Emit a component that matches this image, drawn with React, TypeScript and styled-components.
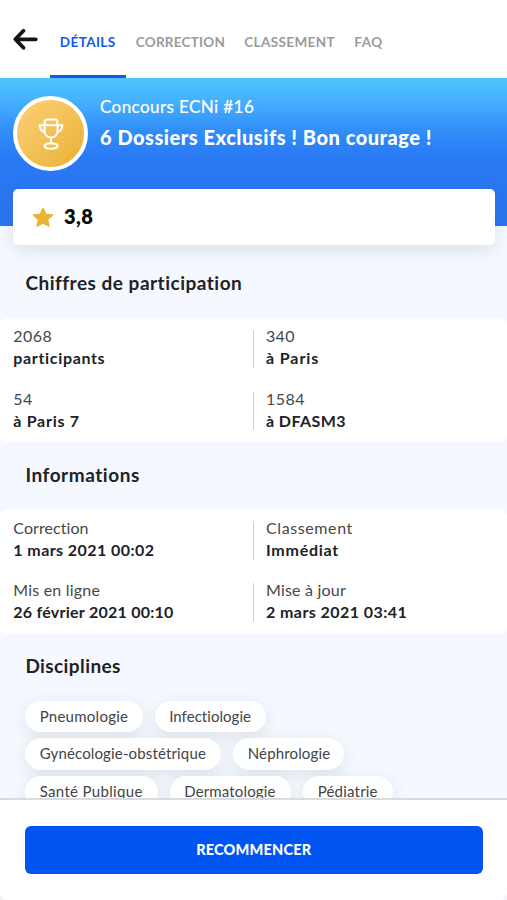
import React from 'react';
import styled, { createGlobalStyle } from 'styled-components';

const GlobalStyle = createGlobalStyle`
  *, *::before, *::after { box-sizing: border-box; }
  body {
    margin: 0;
    background: #f2f4f7;
    font-family: Lato, "Open Sans", sans-serif;
    color: #202225;
    font-variant-ligatures: none;
    overflow: hidden;
  }
`;

type Spaced = { $ls?: number };

const Screen = styled.div`
  display: flex;
  flex-direction: column;
  width: 100%;
  height: 900px;
  background: #f5f9ff;
  border-radius: 0 0 8px 8px;
  overflow: hidden;
`;

const TopBar = styled.header`
  display: flex;
  flex: none;
  height: 78px;
  padding-left: 12px;
  background: #fff;
`;

const BackButton = styled.button`
  display: flex;
  width: 38px;
  padding: 27px 0 0;
  border: 0;
  background: none;
`;

const Tabs = styled.nav`
  display: flex;
`;

const Tab = styled.a<{ $active?: boolean; $width: number } & Spaced>`
  width: ${p => p.$width}px;
  padding: 32px 0 0 9.8px;
  border-bottom: 3px solid ${p => (p.$active ? '#0d59e8' : 'transparent')};
  color: ${p => (p.$active ? '#0f5aeb' : '#9b9b9b')};
  font-size: 13.5px;
  font-weight: 700;
  line-height: 21px;
  letter-spacing: ${p => p.$ls ?? 0}px;
  white-space: nowrap;
`;

const Scroll = styled.main`
  flex: 1;
  min-height: 0;
  overflow: hidden;
`;

const Hero = styled.section`
  height: 147.5px;
  padding: 18px 12.5px 0 13px;
  background: linear-gradient(180deg, #4fc3ff 0, #45b0fd 24px, #3290f8 50px, #2979f4 80px, #2a74ee 100%);
`;

const HeroHead = styled.div`
  display: flex;
  gap: 12px;
  height: 93.3px;
`;

const Medal = styled.div`
  display: flex;
  align-items: center;
  justify-content: center;
  width: 75px;
  height: 75px;
  border: 4px solid #fff;
  border-radius: 50%;
  background: linear-gradient(135deg, #fbd076 0%, #f3c158 50%, #e9b032 100%);
`;

const HeroText = styled.div`
  color: #fff;
  white-space: nowrap;
`;

const Subtitle = styled.div<Spaced>`
  font-size: 17px;
  line-height: 21px;
  letter-spacing: ${p => p.$ls ?? 0}px;
  -webkit-text-stroke: 0.2px #fff;
`;

const Title = styled.h1<Spaced>`
  margin: 8px 0 0;
  font-size: 20px;
  font-weight: 900;
  line-height: 24px;
  letter-spacing: ${p => p.$ls ?? 0}px;
`;

const RatingCard = styled.div`
  display: flex;
  align-items: center;
  gap: 10px;
  height: 56px;
  padding-left: 19px;
  border-radius: 5px;
  background: #fff;
  box-shadow: 0 6px 18px rgba(60, 70, 100, 0.13);
`;

const Rating = styled.strong`
  padding-bottom: 2px;
  color: #08090b;
  font-size: 20px;
  font-weight: 800;
  letter-spacing: 0.4px;
`;

const Section = styled.section`
  height: 191.5px;
`;

const Sections = styled.div`
  padding-top: 44.5px;
`;

const Heading = styled.h2<Spaced>`
  height: 47.5px;
  margin: 0;
  padding-left: 25.4px;
  font-size: 19px;
  font-weight: 700;
  line-height: 25px;
  letter-spacing: ${p => p.$ls ?? 0}px;
`;

const Panel = styled.div`
  display: grid;
  grid-template-columns: 252.5px 1fr;
  grid-auto-rows: 38.5px;
  row-gap: 23.8px;
  height: 124.5px;
  padding: 12px 0;
  border-radius: 8px;
  background: #fff;
`;

const Cell = styled.div`
  padding-left: 13.3px;
  white-space: nowrap;

  &:nth-child(even) {
    padding-left: 12.5px;
    border-left: 1.5px solid #d2d2d2;
  }
`;

const CellTop = styled.div<Spaced>`
  margin-top: -4.3px;
  color: #45474a;
  font-size: 16px;
  line-height: 22px;
  letter-spacing: ${p => p.$ls ?? 0}px;
`;

const CellBottom = styled.div<Spaced>`
  font-size: 16px;
  font-weight: 700;
  line-height: 22px;
  letter-spacing: ${p => p.$ls ?? 0}px;
`;

const Chips = styled.div`
  display: flex;
  flex-direction: column;
  gap: 6.3px;
  padding: 0 25px;
`;

const ChipRow = styled.div`
  display: flex;
  gap: 12px;
`;

const Chip = styled.span<{ $width: number } & Spaced>`
  width: ${p => p.$width}px;
  height: 31.5px;
  padding-left: 14.7px;
  border-radius: 16px;
  background: #fff;
  box-shadow: 0 4px 16px rgba(50, 55, 75, 0.12);
  color: #424446;
  font-size: 15px;
  line-height: 31.4px;
  letter-spacing: ${p => p.$ls ?? 0}px;
  white-space: nowrap;
`;

const Footer = styled.footer`
  flex: none;
  height: 102px;
  padding: 25.5px 24.5px 0 25px;
  border-top: 2px solid #d9dbe0;
  background: #fff;
`;

const RestartButton = styled.button`
  display: block;
  width: 100%;
  height: 48.7px;
  padding: 0;
  border: 0;
  border-radius: 6px;
  background: #0055f2;
  color: #fff;
  font-family: inherit;
  font-size: 14.5px;
  font-weight: 900;
  letter-spacing: 0.2px;
`;

const BackIcon = () => (
  <svg width="27" height="24" viewBox="0 0 27 24" fill="none" stroke="#141414" strokeWidth="3.8" strokeLinecap="round" strokeLinejoin="round">
    <path d="M11.5 3.8 3.3 12.3 11.5 20.8M3.5 12.3H23.8" />
  </svg>
);

const TrophyIcon = () => (
  <svg width="28" height="34" viewBox="0 0 28 34" fill="none" stroke="#fff" strokeWidth="2" strokeLinecap="round" strokeLinejoin="round">
    <rect x="7.5" y="2.5" width="13" height="5.7" rx="2.8" />
    <path d="M7.5 8.2V13.5c0 4.3 2.8 7 6.5 7s6.500-2.700 6.500-7V8.200M7.500 8.200H2.500c.3 3.800 2.200 6.300 5.500 7.100M20.500 8.200H25.500c-.3 3.800-2.200 6.300-5.500 7.100M14 20.500v6" />
    <ellipse cx="14" cy="29" rx="6.6" ry="2.8" />
  </svg>
);

const StarIcon = () => (
  <svg width="22" height="21" viewBox="0 0 22 21" fill="#ebb236" stroke="#ebb236" strokeWidth="1.4" strokeLinejoin="round">
    <path d="M11 1.3 13.7 7.1 20.5 7.9 15.6 12.6 16.9 19.2 11 16 5.1 19.2 6.4 12.6 1.5 7.9 8.3 7.1Z" />
  </svg>
);

type Spec = [text: string, ls: number];

const sections: { heading: Spec; cells: [Spec, Spec][] }[] = [
  {
    heading: ['Chiffres de participation', 0.5],
    cells: [
      [['2068', 0.46], ['participants', 0.66]],
      [['340', 0.33], ['à Paris', 0.9]],
      [['54', 0.44], ['à Paris 7', 0.72]],
      [['1584', 0.46], ['à DFASM3', 0.42]],
    ],
  },
  {
    heading: ['Informations', 0.55],
    cells: [
      [['Correction', 0.07], ['1 mars 2021 00:02', 0.43]],
      [['Classement', 0.6], ['Immédiat', 0.75]],
      [['Mis en ligne', 0.2], ['26 février 2021 00:10', 0.25]],
      [['Mise à jour', 0.2], ['2 mars 2021 03:41', 0.43]],
    ],
  },
];

const chipRows: [text: string, width: number, ls: number][][] = [
  [['Pneumologie', 117.5, 0.26], ['Infectiologie', 111.5, 0.05]],
  [['Gynécologie-obstétrique', 196, 0.15], ['Néphrologie', 111, 0.15]],
  [['Santé Publique', 132.5, 0.33], ['Dermatologie', 121.5, 0.15], ['Pédiatrie', 89.5, 0.2]],
];

export default function App() {
  return (
    <>
      <GlobalStyle />
      <Screen>
        <TopBar>
          <BackButton aria-label="Retour"><BackIcon /></BackButton>
          <Tabs>
            <Tab $active $width={76} $ls={0.4}>DÉTAILS</Tab>
            <Tab $width={108.5} $ls={0.24}>CORRECTION</Tab>
            <Tab $width={110} $ls={0.38}>CLASSEMENT</Tab>
            <Tab $width={48} $ls={0.5}>FAQ</Tab>
          </Tabs>
        </TopBar>
        <Scroll>
          <Hero>
            <HeroHead>
              <Medal><TrophyIcon /></Medal>
              <HeroText>
                <Subtitle $ls={0.42}>Concours ECNi #16</Subtitle>
                <Title $ls={0.52}>6 Dossiers Exclusifs ! Bon courage !</Title>
              </HeroText>
            </HeroHead>
            <RatingCard>
              <StarIcon />
              <Rating>3,8</Rating>
            </RatingCard>
          </Hero>
          <Sections>
            {sections.map(({ heading: [title, ls], cells }) => (
              <Section key={title}>
                <Heading $ls={ls}>{title}</Heading>
                <Panel>
                  {cells.map(([top, bottom]) => (
                    <Cell key={bottom[0]}>
                      <CellTop $ls={top[1]}>{top[0]}</CellTop>
                      <CellBottom $ls={bottom[1]}>{bottom[0]}</CellBottom>
                    </Cell>
                  ))}
                </Panel>
              </Section>
            ))}
            <Heading $ls={0.4}>Disciplines</Heading>
            <Chips>
              {chipRows.map(row => (
                <ChipRow key={row[0][0]}>
                  {row.map(([text, width, ls]) => (
                    <Chip key={text} $width={width} $ls={ls}>{text}</Chip>
                  ))}
                </ChipRow>
              ))}
            </Chips>
          </Sections>
        </Scroll>
        <Footer>
          <RestartButton>RECOMMENCER</RestartButton>
        </Footer>
      </Screen>
    </>
  );
}
